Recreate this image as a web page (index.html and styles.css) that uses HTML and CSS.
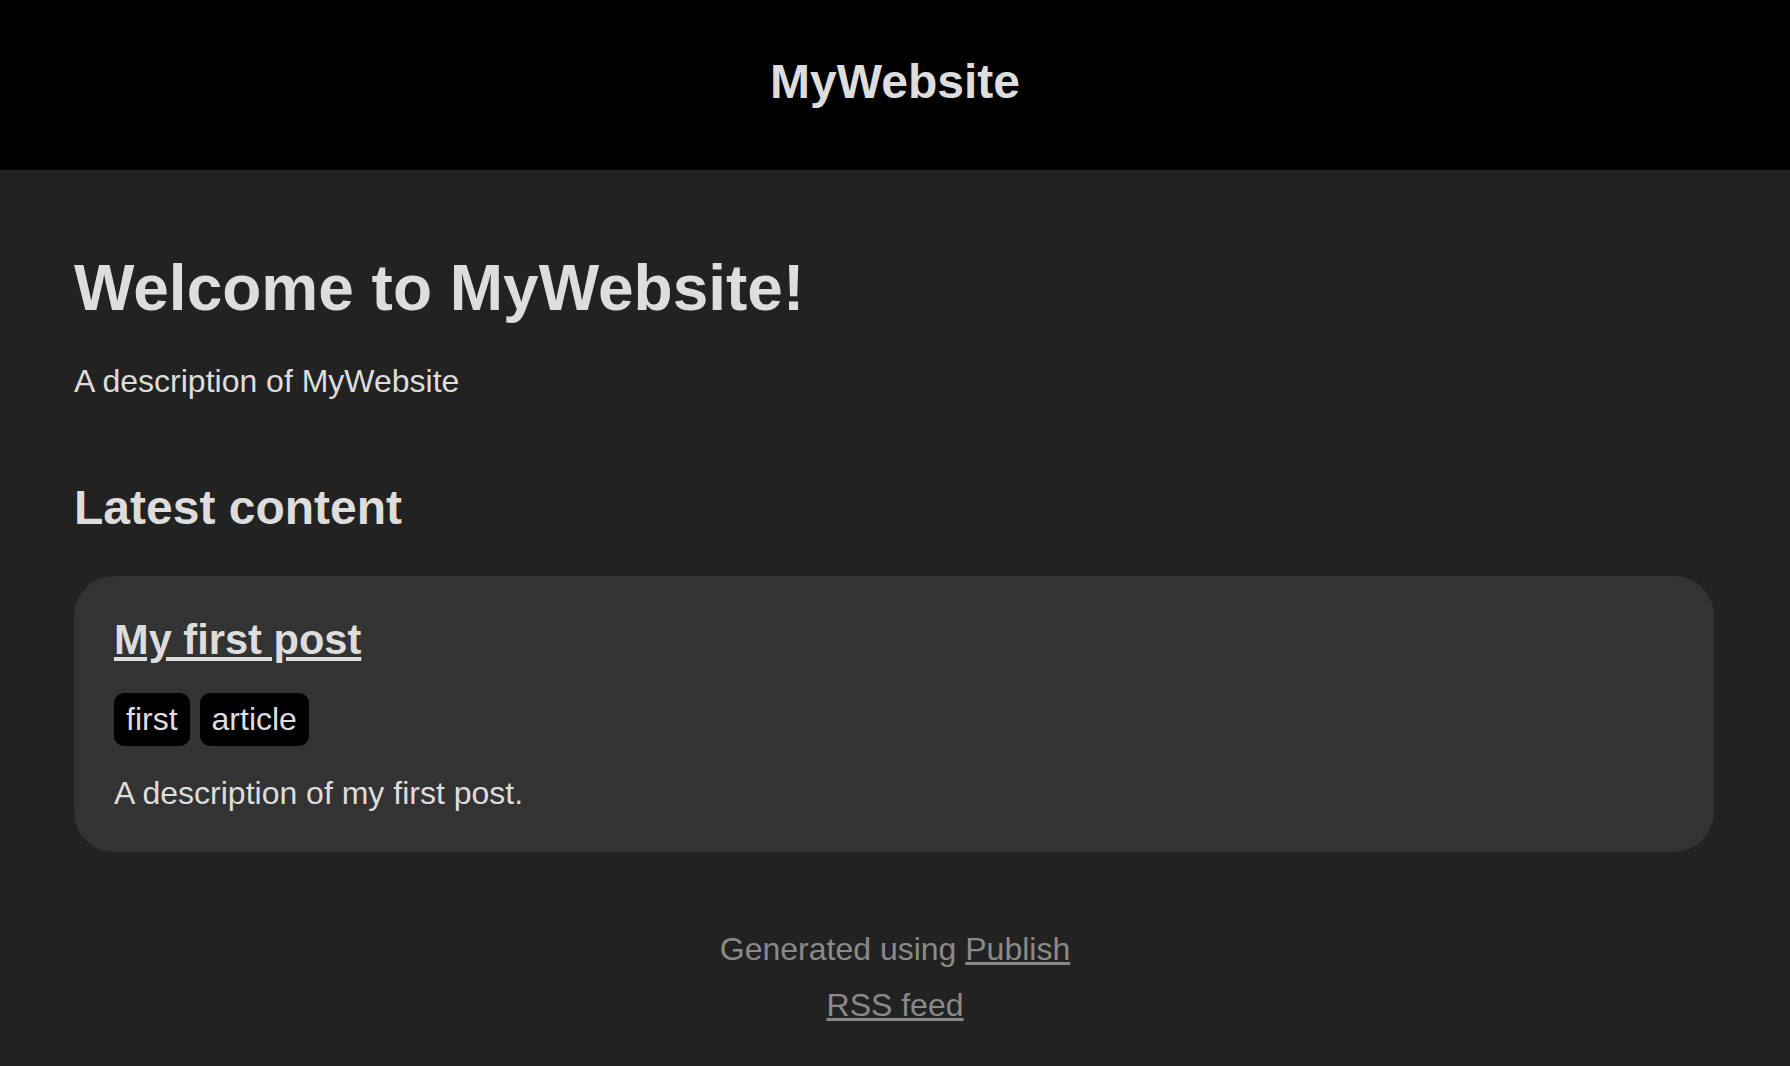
FILE: index.html
```html
<!DOCTYPE html>
<html lang="en">
<head>
<meta charset="utf-8">
<title>MyWebsite</title>
<link rel="stylesheet" href="styles.css">
</head>
<body>
<header class="site-header">
  <div class="header-wrapper">
    <a class="site-name" href="#">MyWebsite</a>
  </div>
</header>
<div class="wrapper">
  <h1 class="page-title">Welcome to MyWebsite!</h1>
  <p class="description">A description of MyWebsite</p>
  <h2 class="section-title">Latest content</h2>
  <ul class="item-list">
    <li class="item">
      <h1 class="item-title"><a href="#">My first post</a></h1>
      <ul class="tag-list">
        <li class="tag"><a href="#">first</a></li><li class="tag"><a href="#">article</a></li>
      </ul>
      <p class="item-desc">A description of my first post.</p>
    </li>
  </ul>
</div>
<footer class="site-footer">
  <p class="footer-line">Generated using <a href="#">Publish</a></p>
  <p class="footer-line"><a href="#">RSS feed</a></p>
</footer>
</body>
</html>
```
FILE: styles.css
```css
* {
  margin: 0;
  padding: 0;
  box-sizing: border-box;
}

body {
  background-color: #222;
  color: #ddd;
  font-family: "Liberation Sans", Arial, Helvetica, sans-serif;
  font-size: 32px;
  text-align: center;
}

a {
  color: inherit;
}

.site-header {
  background-color: #000;
}

.header-wrapper {
  padding: 54px 0 61px;
  text-align: center;
}

.site-name {
  font-size: 48px;
  font-weight: bold;
  color: #ddd;
  text-decoration: none;
}

.wrapper {
  padding: 81px 76px 79px 74px;
  text-align: left;
}

.page-title {
  font-size: 64px;
  font-weight: bold;
  margin-bottom: 38px;
}

.description {
  margin-bottom: 80px;
}

.section-title {
  font-size: 48px;
  font-weight: bold;
  margin-bottom: 41px;
}

.item-list {
  list-style: none;
}

.item {
  display: block;
  padding: 40px;
  border-radius: 40px;
  background-color: #333;
}

.item-title {
  font-size: 41.6px;
  font-weight: bold;
  margin-bottom: 29px;
}

.tag-list {
  list-style: none;
  margin-bottom: 29px;
}

.tag {
  display: inline-block;
  background-color: #000;
  color: #ddd;
  padding: 8px 12px;
  border-radius: 10px;
  margin-right: 10px;
}

.tag a {
  text-decoration: none;
}

.item-desc {
  margin-bottom: 0;
}

.site-footer {
  color: #8a8a8a;
  text-align: center;
}

.footer-line {
  margin-bottom: 19px;
}
```
